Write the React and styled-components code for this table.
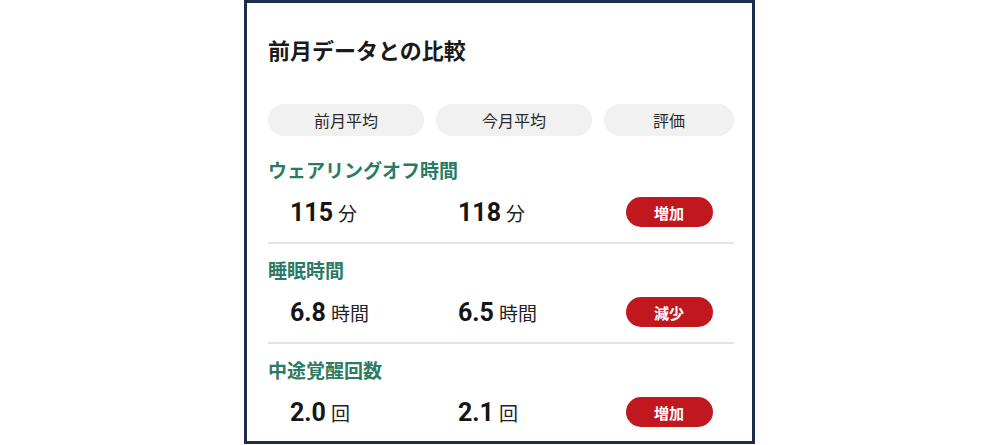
import styled, { createGlobalStyle } from 'styled-components';

const GlobalStyle = createGlobalStyle`
  body {
    margin: 0;
    background: #fff;
    font-family: "Roboto", "Noto Sans CJK JP", sans-serif;
    color: #1a1a1a;
  }
`;

const Card = styled.div`
  box-sizing: border-box;
  width: 511px;
  margin: 0 0 0 244px;
  padding: 33px 18px 0 21px;
  border: 3px solid #1e2e4a;
  background: #fff;
`;

const Title = styled.h2`
  margin: 0 0 36px;
  font-size: 22px;
  line-height: 32px;
  font-weight: 700;
  color: #1a1a1a;
`;

const Columns = styled.div`
  display: grid;
  grid-template-columns: 156px 156px 130px;
  column-gap: 12px;
  align-items: center;
`;

const Pill = styled.div`
  height: 32px;
  border-radius: 16px;
  background: #f1f1f1;
  display: flex;
  align-items: center;
  justify-content: center;
  font-size: 16px;
  color: #2a2a2a;
`;

const Rows = styled.div`
  margin-top: 8px;
`;

const Section = styled.div`
  padding: 14px 0 15px;
  border-bottom: 2px solid #e4e4e4;

  &:last-child {
    padding-bottom: 14px;
    border-bottom: none;
  }
`;

const Label = styled.div`
  font-size: 19px;
  line-height: 28px;
  font-weight: 700;
  color: #2b7a64;
  margin-bottom: 11px;
`;

const ValueRow = styled(Columns)`
  height: 30px;
`;

const Value = styled.div`
  padding-left: 22px;
  display: flex;
  align-items: baseline;
`;

const Num = styled.span`
  font-size: 25px;
  font-weight: 700;
  color: #151515;
`;

const Unit = styled.span`
  margin-left: 5px;
  font-size: 19px;
  color: #222;
`;

const Badge = styled.div`
  justify-self: center;
  width: 87px;
  height: 30px;
  border-radius: 15px;
  background: #c1181f;
  color: #fff;
  font-size: 15px;
  font-weight: 700;
  display: flex;
  align-items: center;
  justify-content: center;
`;

const rows = [
  { label: 'ウェアリングオフ時間', prev: '115', cur: '118', unit: '分', result: '増加' },
  { label: '睡眠時間', prev: '6.8', cur: '6.5', unit: '時間', result: '減少' },
  { label: '中途覚醒回数', prev: '2.0', cur: '2.1', unit: '回', result: '増加' },
];

export default function App() {
  return (
    <>
      <GlobalStyle />
      <Card>
        <Title>前月データとの比較</Title>
        <Columns>
          <Pill>前月平均</Pill>
          <Pill>今月平均</Pill>
          <Pill>評価</Pill>
        </Columns>
        <Rows>
          {rows.map((r) => (
            <Section key={r.label}>
              <Label>{r.label}</Label>
              <ValueRow>
                <Value>
                  <Num>{r.prev}</Num>
                  <Unit>{r.unit}</Unit>
                </Value>
                <Value>
                  <Num>{r.cur}</Num>
                  <Unit>{r.unit}</Unit>
                </Value>
                <Badge>{r.result}</Badge>
              </ValueRow>
            </Section>
          ))}
        </Rows>
      </Card>
    </>
  );
}
